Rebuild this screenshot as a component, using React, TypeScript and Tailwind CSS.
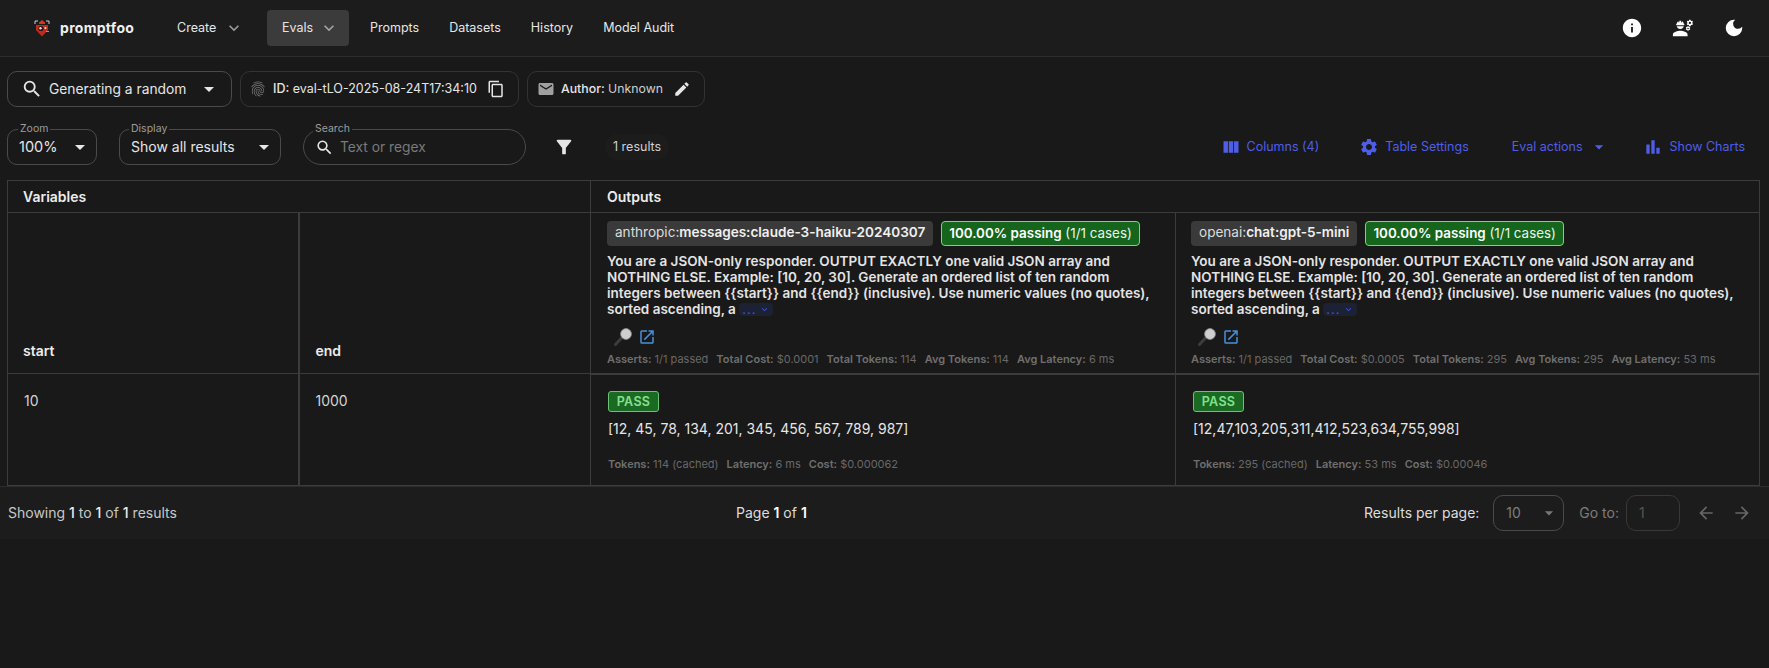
import type { ReactNode } from "react";
import {
  MdArrowBack,
  MdArrowDropDown,
  MdArrowForward,
  MdBarChart,
  MdContentCopy,
  MdDarkMode,
  MdEdit,
  MdEmail,
  MdEngineering,
  MdExpandMore,
  MdFilterAlt,
  MdFingerprint,
  MdInfo,
  MdOpenInNew,
  MdSearch,
  MdSettings,
  MdViewColumn,
} from "react-icons/md";

const navLinks = ["Prompts", "Datasets", "History", "Model Audit"];

function Logo() {
  return (
    <svg width="18" height="18" viewBox="0 0 18 18" className="shrink-0">
      <path d="M2 5V2h3M16 5V2h-3" fill="none" stroke="#cfcfcf" strokeWidth="1" />
      <path d="M6 3.5 9 1l3 2.5v1.5H6z" fill="#d8341f" />
      <path d="M3 6h12v5l-6 6.5L3 11z" fill="#c42a1c" />
      <circle cx="8" cy="9.5" r="2.6" fill="#2a1412" />
      <circle cx="7.5" cy="9.3" r="1.2" fill="#e8e0dc" />
      <circle cx="12.4" cy="9" r="1.1" fill="#e8e0dc" />
      <path d="M13 12.5h3" stroke="#9a9a9a" strokeWidth="1" />
    </svg>
  );
}

function MagnifierEmoji() {
  return (
    <svg width="19" height="18" viewBox="0 0 19 18" className="shrink-0">
      <path d="M1.5 16.5 7.5 10" stroke="#3c3c3c" strokeWidth="3" strokeLinecap="round" />
      <circle cx="12" cy="6" r="5.4" fill="#cfcfcf" />
      <circle cx="12" cy="6" r="5.4" fill="none" stroke="#8f8f8f" strokeWidth="0.8" />
    </svg>
  );
}

function FieldBox({ label, notch, className, children }: { label: string; notch: string; className: string; children: ReactNode }) {
  return (
    <div className={`relative flex h-9 items-center border border-[#4a4a4a] ${className}`}>
      <span className={`absolute -top-[8px] bg-[#191919] px-[2px] text-[10.5px] leading-[14px] text-[#9c9c9c] ${notch}`}>{label}</span>
      {children}
    </div>
  );
}

function Stat({ label, value }: { label: string; value: string }) {
  return (
    <span>
      <b className="font-semibold text-[#6f6f6f]">{label}:</b> <span className="text-[#686868]">{value}</span>
    </span>
  );
}

function OutputHeader({ prefix, model, stats, padding }: { prefix: string; model: string; stats: [string, string][]; padding: string }) {
  return (
    <th className={`border border-[#3c3c3c] border-b-2 pt-[8px] pb-[5px] align-top text-left font-normal ${padding}`}>
      <div className="flex gap-2 leading-[23px]">
        <span className="rounded bg-[#3a3a3a] px-2 text-[13.55px] text-[#dcdcdc]">
          {prefix}:<b className="font-semibold text-[#f0f0f0]">{model}</b>
        </span>
        <span className="rounded border border-[#74d97c] bg-[#15651c] px-[7px] text-[13.4px] text-[#e8f5e9]">
          <b className="font-semibold text-white">100.00% passing</b> (1/1 cases)
        </span>
      </div>
      <p className="mt-[7px] text-[13.5px] leading-4 font-semibold text-[#e4e4e4]">
        You are a JSON-only responder. OUTPUT EXACTLY one valid JSON array and NOTHING ELSE. Example: [10, 20, 30]. Generate an ordered list of ten random integers between {"{{start}}"} and {"{{end}}"} (inclusive). Use numeric values (no quotes), sorted ascending, a{" "}
        <span className="inline-flex items-center gap-[3px] rounded-sm bg-[#1c2233] px-[3px] align-baseline text-[13px] leading-[13px] font-normal tracking-[1px] text-[#3f51d8]">
          ...
          <MdExpandMore size={11} />
        </span>
      </p>
      <div className="mt-[11px] flex h-[18px] items-center gap-[5px] pl-[7px]">
        <MagnifierEmoji />
        <MdOpenInNew size={18} className="text-[#4a90d9]" />
      </div>
      <div className="mt-[6px] flex gap-2 text-[11px] leading-[14px]">
        {stats.map(([label, value]) => (
          <Stat key={label} label={label} value={value} />
        ))}
      </div>
    </th>
  );
}

function OutputCell({ text, stats }: { text: string; stats: [string, string][] }) {
  return (
    <td className="border border-[#3c3c3c] px-[17px] pt-4 pb-[12px] align-top">
      <span className="block w-[51px] rounded-[3px] border border-[#68c471] bg-[#1a6a24] text-center text-[12.5px] leading-[19px] font-semibold tracking-wide text-[#85e08d]">
        PASS
      </span>
      <p className="mt-[7px] text-sm leading-[20px] text-[#e6e6e6]">{text}</p>
      <div className="mt-[18px] flex gap-2 text-[11px] leading-[14px]">
        {stats.map(([label, value]) => (
          <Stat key={label} label={label} value={value} />
        ))}
      </div>
    </td>
  );
}

export default function App() {
  return (
    <div className="min-h-[668px] bg-[#191919] font-['Inter',sans-serif] text-[#e6e6e6]">
      <nav className="flex h-[57px] items-center justify-between border-b border-[#2c2c2c] bg-[#1c1c1c] pr-[24px] pl-[33px]">
        <div className="flex items-center">
          <Logo />
          <span className="ml-[9px] w-[75px] text-sm font-bold tracking-[0.3px] text-[#efefef]">promptfoo</span>
          <div className="ml-[42px] flex w-[90px] items-center gap-[8px] text-[12.5px]">
            Create
            <MdExpandMore size={20} className="text-[#9a9a9a]" />
          </div>
          <div className="flex h-9 w-[82px] items-center gap-[6px] rounded bg-[#3b3b3b] pl-[15px] text-[12.5px]">
            Evals
            <MdExpandMore size={20} className="text-[#a5a5a5]" />
          </div>
          <div className="ml-[21px] flex gap-[30px] text-[12.5px]">
            {navLinks.map((link) => (
              <span key={link}>{link}</span>
            ))}
          </div>
        </div>
        <div className="flex items-center gap-[29px] text-white">
          <MdInfo size={22} />
          <MdEngineering size={22} />
          <MdDarkMode size={22} />
        </div>
      </nav>

      <div className="mt-[14px] flex h-[36px] items-center gap-2 pl-[7px]">
        <div className="flex h-9 w-[225px] items-center rounded-[10px] border border-[#4a4a4a] pr-[10px] pl-[13px]">
          <MdSearch size={22} />
          <span className="ml-[6px] flex-1 text-[13.8px]">Generating a random</span>
          <MdArrowDropDown size={24} />
        </div>
        <div className="flex h-9 w-[279px] items-center rounded-[10px] border border-[#333333] pl-[8px]">
          <MdFingerprint size={18} className="text-[#777777]" />
          <span className="ml-[6px] text-[12.5px] whitespace-nowrap">
            <b className="font-medium">ID:</b> eval-tLO-2025-08-24T17:34:10
          </span>
          <MdContentCopy size={18} className="ml-[10px]" />
        </div>
        <div className="flex h-9 w-[178px] items-center rounded-[10px] border border-[#333333] pl-[9px]">
          <MdEmail size={18} className="text-[#a0a0a0]" />
          <span className="ml-[6px] text-[12.3px] whitespace-nowrap">
            <b className="font-medium">Author:</b> <span className="text-[#cfcfcf]">Unknown</span>
          </span>
          <MdEdit size={18} className="ml-[10px]" />
        </div>
      </div>

      <div className="mt-[22px] flex h-[36px] items-center pr-[24px] pl-[7px]">
        <FieldBox label="Zoom" notch="left-[10px]" className="w-[90px] rounded-[10px] pr-[4px] pl-[11px]">
          <span className="flex-1 text-[14.5px]">100%</span>
          <MdArrowDropDown size={24} />
        </FieldBox>
        <FieldBox label="Display" notch="left-[9px]" className="ml-[22px] w-[162px] rounded-[10px] pr-[4px] pl-[11px]">
          <span className="flex-1 text-sm">Show all results</span>
          <MdArrowDropDown size={24} />
        </FieldBox>
        <FieldBox label="Search" notch="left-[9px]" className="ml-[22px] w-[223px] rounded-[18px] pl-[11px]">
          <MdSearch size={19} />
          <span className="ml-[6px] text-[13.8px] text-[#7a7a7a]">Text or regex</span>
        </FieldBox>
        <MdFilterAlt size={22} className="ml-[27px]" />
        <span className="ml-[30px] rounded-full bg-[#1c1c1c] px-[8px] py-[4px] text-[12.5px] text-[#d0d0d0]">1 results</span>
        <div className="ml-auto flex items-center text-[12.5px] text-[#4f5ee8]">
          <MdViewColumn size={20} />
          <span className="ml-[6px]">Columns (4)</span>
          <MdSettings size={20} className="ml-[40px]" />
          <span className="ml-[6px]">Table Settings</span>
          <span className="ml-[43px]">Eval actions</span>
          <MdArrowDropDown size={20} className="ml-[6px]" />
          <MdBarChart size={20} className="ml-[34px]" />
          <span className="ml-[7px]">Show Charts</span>
        </div>
      </div>

      <div className="mt-[15px] px-[7px]">
        <table className="w-[1752px] table-fixed border-collapse">
          <colgroup>
            <col className="w-[291px]" />
            <col className="w-[292px]" />
            <col className="w-[585px]" />
            <col className="w-[584px]" />
          </colgroup>
          <thead>
            <tr className="h-[32px] text-left text-sm font-semibold text-[#ececec]">
              <th colSpan={2} className="border border-[#3c3c3c] px-[15px] font-semibold">Variables</th>
              <th colSpan={2} className="border border-[#3c3c3c] px-4 font-semibold">Outputs</th>
            </tr>
            <tr className="h-[161px] text-left text-sm text-[#ececec]">
              <th className="border border-[#3c3c3c] border-r-2 px-[15px] pb-[12px] align-bottom font-semibold">start</th>
              <th className="border border-[#3c3c3c] px-4 pb-[12px] align-bottom font-semibold">end</th>
              <OutputHeader
                prefix="anthropic"
                model="messages:claude-3-haiku-20240307"
                padding="px-4"
                stats={[["Asserts", "1/1 passed"], ["Total Cost", "$0.0001"], ["Total Tokens", "114"], ["Avg Tokens", "114"], ["Avg Latency", "6 ms"]]}
              />
              <OutputHeader
                prefix="openai"
                model="chat:gpt-5-mini"
                padding="px-[15px]"
                stats={[["Asserts", "1/1 passed"], ["Total Cost", "$0.0005"], ["Total Tokens", "295"], ["Avg Tokens", "295"], ["Avg Latency", "53 ms"]]}
              />
            </tr>
          </thead>
          <tbody>
            <tr className="h-[112px]">
              <td className="border border-[#3c3c3c] border-r-2 px-4 pt-[17px] align-top text-sm text-[#d4d4d4]">10</td>
              <td className="border border-[#3c3c3c] px-4 pt-[17px] align-top text-sm text-[#d4d4d4]">1000</td>
              <OutputCell text="[12, 45, 78, 134, 201, 345, 456, 567, 789, 987]" stats={[["Tokens", "114 (cached)"], ["Latency", "6 ms"], ["Cost", "$0.000062"]]} />
              <OutputCell text="[12,47,103,205,311,412,523,634,755,998]" stats={[["Tokens", "295 (cached)"], ["Latency", "53 ms"], ["Cost", "$0.00046"]]} />
            </tr>
          </tbody>
        </table>
      </div>

      <footer className="flex h-[53px] items-center border-t border-[#2c2c2c] bg-[#1c1c1c] pr-[17px] pl-[8px] text-sm text-[#dddddd]">
        <span className="w-[728px] text-[#c8c8c8]">
          Showing <b className="font-medium text-[#eeeeee]">1</b> to <b className="font-medium text-[#eeeeee]">1</b> of <b className="font-medium text-[#eeeeee]">1</b> results
        </span>
        <span>
          Page <b className="font-semibold text-white">1</b> of <b className="font-semibold text-white">1</b>
        </span>
        <span className="ml-auto">Results per page:</span>
        <div className="ml-[14px] flex h-9 w-[71px] items-center rounded-[10px] border border-[#4a4a4a] pr-[4px] pl-[12px] text-[#7c7c7c]">
          <span className="flex-1">10</span>
          <MdArrowDropDown size={20} className="text-[#777777]" />
        </div>
        <span className="ml-[15px] text-[#7c7c7c]">Go to:</span>
        <div className="ml-[7px] flex h-9 w-[54px] items-center rounded-[10px] border border-[#383838] pl-[12px] text-[#555555]">1</div>
        <MdArrowBack size={20} className="ml-[16px] text-[#666666]" />
        <MdArrowForward size={20} className="ml-[16px] text-[#666666]" />
      </footer>
    </div>
  );
}
